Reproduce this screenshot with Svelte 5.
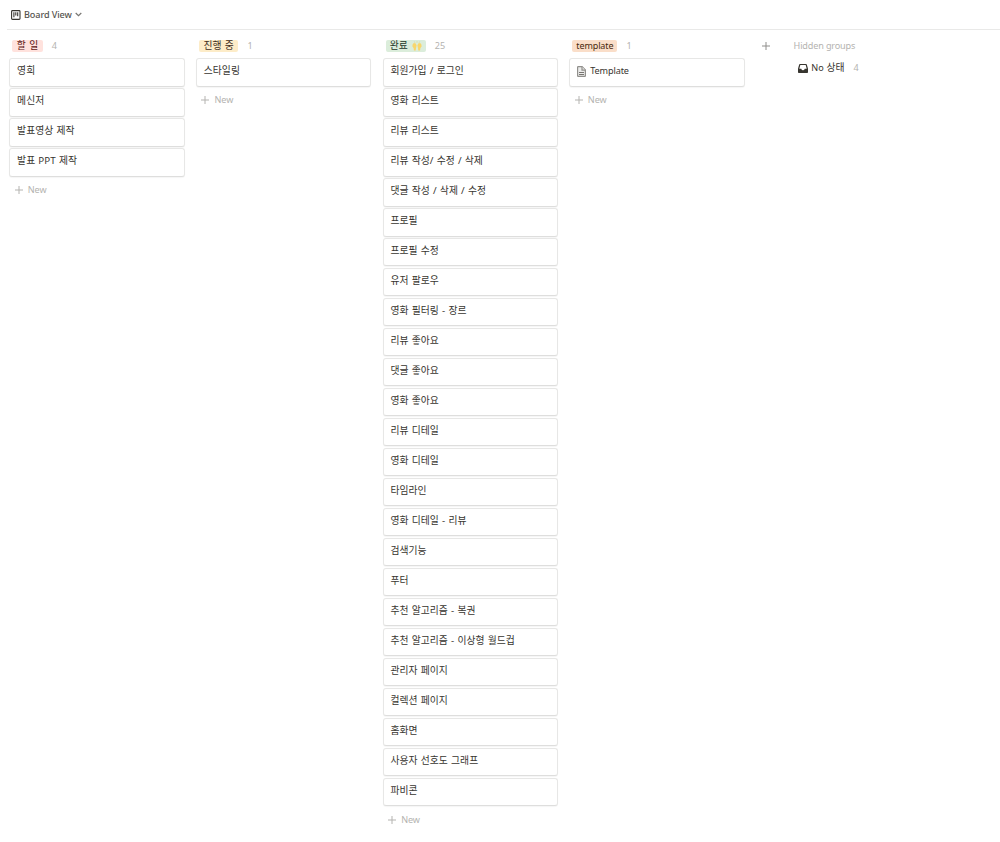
<script>
  const columns = [
    { name: '할 일', tone: 'red', count: 4, cards: ['영희', '메신저', '발표영상 제작', '발표 PPT 제작'] },
    { name: '진행 중', tone: 'yellow', count: 1, cards: ['스타일링'] },
    {
      name: '완료', tone: 'green', count: 25, hands: true,
      cards: [
        '회원가입 / 로그인', '영화 리스트', '리뷰 리스트', '리뷰 작성/ 수정 / 삭제',
        '댓글 작성 / 삭제 / 수정', '프로필', '프로필 수정', '유저 팔로우',
        '영화 필터링 - 장르', '리뷰 좋아요', '댓글 좋아요', '영화 좋아요',
        '리뷰 디테일', '영화 디테일', '타임라인', '영화 디테일 - 리뷰', '검색기능',
        '푸터', '추천 알고리즘 - 복권', '추천 알고리즘 - 이상형 월드컵',
        '관리자 페이지', '컬렉션 페이지', '홈화면', '사용자 선호도 그래프', '파비콘'
      ]
    },
    { name: 'template', tone: 'orange', count: 1, latin: true, cards: ['Template'] }
  ];
</script>

{#snippet plus()}
  <svg class="plus" width="8" height="8" viewBox="0 0 8 8"><path d="M4 0v8M0 4h8" /></svg>
{/snippet}

<main>
  <header>
    <svg class="board-icon" width="10" height="10" viewBox="0 0 10 10">
      <rect x=".6" y=".6" width="8.4" height="8.8" rx=".9" />
      <path d="M2.9 2.2v5M4.8 2.2v3.2M6.7 2.2v4" />
    </svg>
    <span class="view">Board View</span>
    <svg class="chevron" width="7" height="5" viewBox="0 0 7 5"><path d="M.7 1l2.8 2.6L6.3 1" /></svg>
  </header>

  <div class="board">
    {#each columns as col}
      <section>
        <div class="head">
          <span class="tag {col.tone}" class:latin={col.latin}>
            {col.name}
            {#if col.hands}
              <svg class="hands" width="10" height="10" viewBox="0 0 10 10">
                <path d="M.6 3.4L1.8 2l2 .4.8 2.2-.6 2.6-.3 2.4H1.9L1.6 7 .4 5.4zM9.4 3.4L8.2 2l-2 .4-.8 2.2.6 2.6.3 2.4h1.8L8.4 7l1.2-1.6z" fill="#f8d66c" />
                <path d="M2.4.5l.5 1.3M5 .2v1.5M7.6.5l-.5 1.3" stroke="#d9d79d" stroke-width=".8" />
              </svg>
            {/if}
          </span>
          <span class="count">{col.count}</span>
        </div>
        <div class="cards">
          {#each col.cards as card}
            <article class:latin={col.latin}>
              {#if col.latin}
                <svg class="page" width="9" height="11" viewBox="0 0 9 11">
                  <path class="sheet" d="M.6 1.2Q.6.6 1.2.6h3.900l3.300 3.500v5.700q0 .6-.6.6H1.200q-.6 0-.6-.6z" />
                  <path class="sheet" d="M5 .7v3.500h3.300" />
                  <path class="lines" d="M2 6.500h5M2 8.500h5" />
                </svg>
              {/if}
              <span>{card}</span>
            </article>
          {/each}
        </div>
        <div class="new">{@render plus()}<span>New</span></div>
      </section>
    {/each}

    <div class="add">{@render plus()}</div>

    <aside>
      <div class="hidden-title">Hidden groups</div>
      <div class="hidden-row">
        <svg width="10" height="9" viewBox="0 0 10 9">
          <path fill-rule="evenodd" d="M2 0h6q.7 0 .9.7L10 4.800v3.400q0 .8-.8.8H.8Q0 9 0 8.200V4.800L1.100.7Q1.300 0 2 0zM2.300 1.100L1.300 4.800h2q.3 1.500 1.700 1.500t1.700-1.500h2l-1-3.700z" />
        </svg>
        <span class="state"><span class="no">No</span> 상태</span>
        <span class="count">4</span>
      </div>
    </aside>
  </div>
</main>

<style>
  :global(body) { margin: 0; background: #fff; }
  main {
    width: 1000px; height: 842px; overflow: hidden; box-sizing: border-box;
    padding-left: 7px;
    font: 9.8px/14px "Noto Sans", "Noto Sans CJK KR", sans-serif;
    color: #37352f;
  }
  svg { display: block; flex: none; fill: none; }
  header {
    height: 29px; box-sizing: content-box; border-bottom: 1px solid #e9e9e8;
    display: flex; align-items: center; padding-left: 4px;
  }
  .board-icon { stroke: #37352f; stroke-width: 1.1; }
  .view { margin-left: 3px; width: 49px; font-size: 9.1px; font-weight: 500; letter-spacing: -.1px; white-space: nowrap; color: #55534e; }
  .chevron { margin-left: 2px; stroke: #777571; stroke-width: 1.2; }
  .board { display: flex; padding: 10px 0 0 2.3px; }
  section { width: 175.4px; margin-right: 11.3px; flex: none; }
  .head { height: 12px; padding-left: 3px; display: flex; align-items: center; }
  .tag {
    height: 12px; line-height: 12px; border-radius: 2px; padding: 0 4.5px;
    display: flex; align-items: center; white-space: nowrap; word-spacing: .8px;
  }
  .tag.latin { font-size: 9px; letter-spacing: -.12px; padding: 0 4px; }
  .red { background: #ffe2dd; color: #5d1715; }
  .yellow { background: #fdecc8; color: #402c1b; }
  .green { background: #dbeddb; color: #1c3829; padding: 0 4px; }
  .orange { background: #fadec9; color: #49290e; }
  .hands { margin-left: 4px; }
  .count { margin-left: 9px; font-size: 9.1px; color: #b4b3b0; }
  .cards { display: grid; grid-auto-rows: 29px; row-gap: 1px; padding-top: 6px; }
  article {
    box-sizing: border-box; height: 29px; border: 1px solid #e7e7e6; border-bottom-color: #dededd;
    border-radius: 3px; box-shadow: 0 1px 1px rgba(15, 15, 15, .04);
    padding: 5px 6.8px 0; display: flex; white-space: nowrap; background: #fff;
    word-spacing: .6px; letter-spacing: .03px;
  }
  article:nth-child(n + 7) { height: 28px; }
  article.latin { font-size: 9.1px; letter-spacing: -.1px; }
  .page { margin: 2px 4px 0 0; }
  .sheet { stroke: #91908c; stroke-width: 1.2; fill: #ececeb; }
  .lines { stroke: #777571; stroke-width: 1; }
  .plus { stroke: #b4b3b0; stroke-width: 1; }
  .new { display: flex; align-items: center; gap: 5px; padding: 6px 0 0 5.5px; font-size: 9.1px; letter-spacing: -.1px; color: #b4b3b0; }
  .add { width: 8px; margin-left: 5.5px; padding-top: 2px; }
  .add .plus { stroke: #8f8e8b; }
  aside { margin-left: 24px; }
  .hidden-title { font-size: 9.1px; line-height: 12px; letter-spacing: -.15px; color: #b4b3b0; }
  .hidden-row { display: flex; align-items: center; margin: 9px 0 0 4.3px; }
  .hidden-row svg { fill: #37352f; }
  .state { margin-left: 3.5px; word-spacing: .3px; }
  .no { font-size: 9.1px; letter-spacing: -.1px; }
</style>
